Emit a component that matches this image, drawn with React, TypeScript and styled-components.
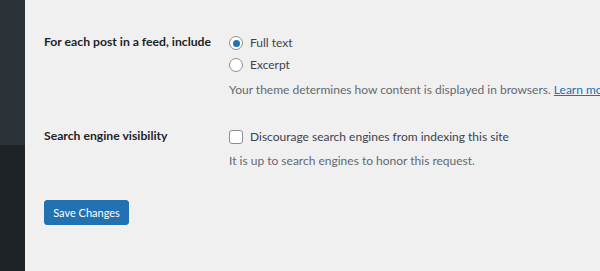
import React from "react";
import styled, { createGlobalStyle } from "styled-components";

const GlobalStyle = createGlobalStyle`
  html, body {
    margin: 0;
    padding: 0;
    background: #f0f0f1;
  }
  body {
    font-family: Lato, "Noto Sans", sans-serif;
    color: #3c434a;
  }
`;

const Page = styled.div`
  display: flex;
  width: 600px;
  height: 271px;
  overflow: hidden;
`;

const Sidebar = styled.div`
  width: 25px;
  flex-shrink: 0;
  display: flex;
  flex-direction: column;
`;

const SidebarBlock = styled.div<{ $dark?: boolean }>`
  background: ${(p) => (p.$dark ? "#1d2327" : "#2c3338")};
  height: ${(p) => (p.$dark ? "auto" : "145px")};
  flex: ${(p) => (p.$dark ? 1 : "none")};
`;

const Content = styled.div`
  flex: 1;
  padding: 32px 0 0 19px;
  min-width: 0;
`;

const SettingsTable = styled.div`
  display: grid;
  grid-template-columns: 185px 1fr;
  row-gap: 26px;
`;

const Label = styled.div`
  font-size: 12.2px;
  font-weight: 700;
  line-height: 20px;
  color: #1d2327;
  white-space: nowrap;
`;

const Field = styled.div`
  display: flex;
  flex-direction: column;
  white-space: nowrap;
`;

const Choice = styled.label`
  display: flex;
  align-items: center;
  gap: 7px;
  height: 22px;
  font-size: 12px;
  line-height: 20px;
`;

const Radio = styled.span<{ $checked?: boolean }>`
  box-sizing: border-box;
  width: 14px;
  height: 14px;
  border: 1px solid #8c8f94;
  border-radius: 50%;
  background: #fff;
  display: flex;
  align-items: center;
  justify-content: center;

  &::after {
    content: "";
    display: ${(p) => (p.$checked ? "block" : "none")};
    width: 7px;
    height: 7px;
    border-radius: 50%;
    background: #2271b1;
  }
`;

const Checkbox = styled.span`
  box-sizing: border-box;
  width: 14px;
  height: 14px;
  border: 1px solid #8c8f94;
  border-radius: 3px;
  background: #fff;
`;

const Description = styled.p<{ $top: number }>`
  margin: ${(p) => p.$top}px 0 0;
  font-size: 12px;
  line-height: 20px;
  color: #646970;

  & a {
    color: #2271b1;
    text-decoration: underline;
  }
`;

const Submit = styled.div`
  padding-top: 29px;
`;

const Button = styled.button`
  box-sizing: border-box;
  height: 25px;
  width: 85px;
  padding: 0;
  border: 1px solid #2271b1;
  border-radius: 3px;
  background: #2271b1;
  color: #fff;
  font-family: inherit;
  font-size: 11px;
  line-height: 23px;
  cursor: pointer;
`;

export default function App() {
  return (
    <Page>
      <GlobalStyle />
      <Sidebar>
        <SidebarBlock />
        <SidebarBlock $dark />
      </Sidebar>
      <Content>
        <SettingsTable>
          <Label>For each post in a feed, include</Label>
          <Field>
            <Choice>
              <Radio $checked />
              Full text
            </Choice>
            <Choice>
              <Radio />
              Excerpt
            </Choice>
            <Description $top={4}>
              Your theme determines how content is displayed in browsers.{" "}
              <a href="#">Learn mo</a>
            </Description>
          </Field>

          <Label>Search engine visibility</Label>
          <Field>
            <Choice>
              <Checkbox />
              Discourage search engines from indexing this site
            </Choice>
            <Description $top={3}>
              It is up to search engines to honor this request.
            </Description>
          </Field>
        </SettingsTable>
        <Submit>
          <Button>Save Changes</Button>
        </Submit>
      </Content>
    </Page>
  );
}
